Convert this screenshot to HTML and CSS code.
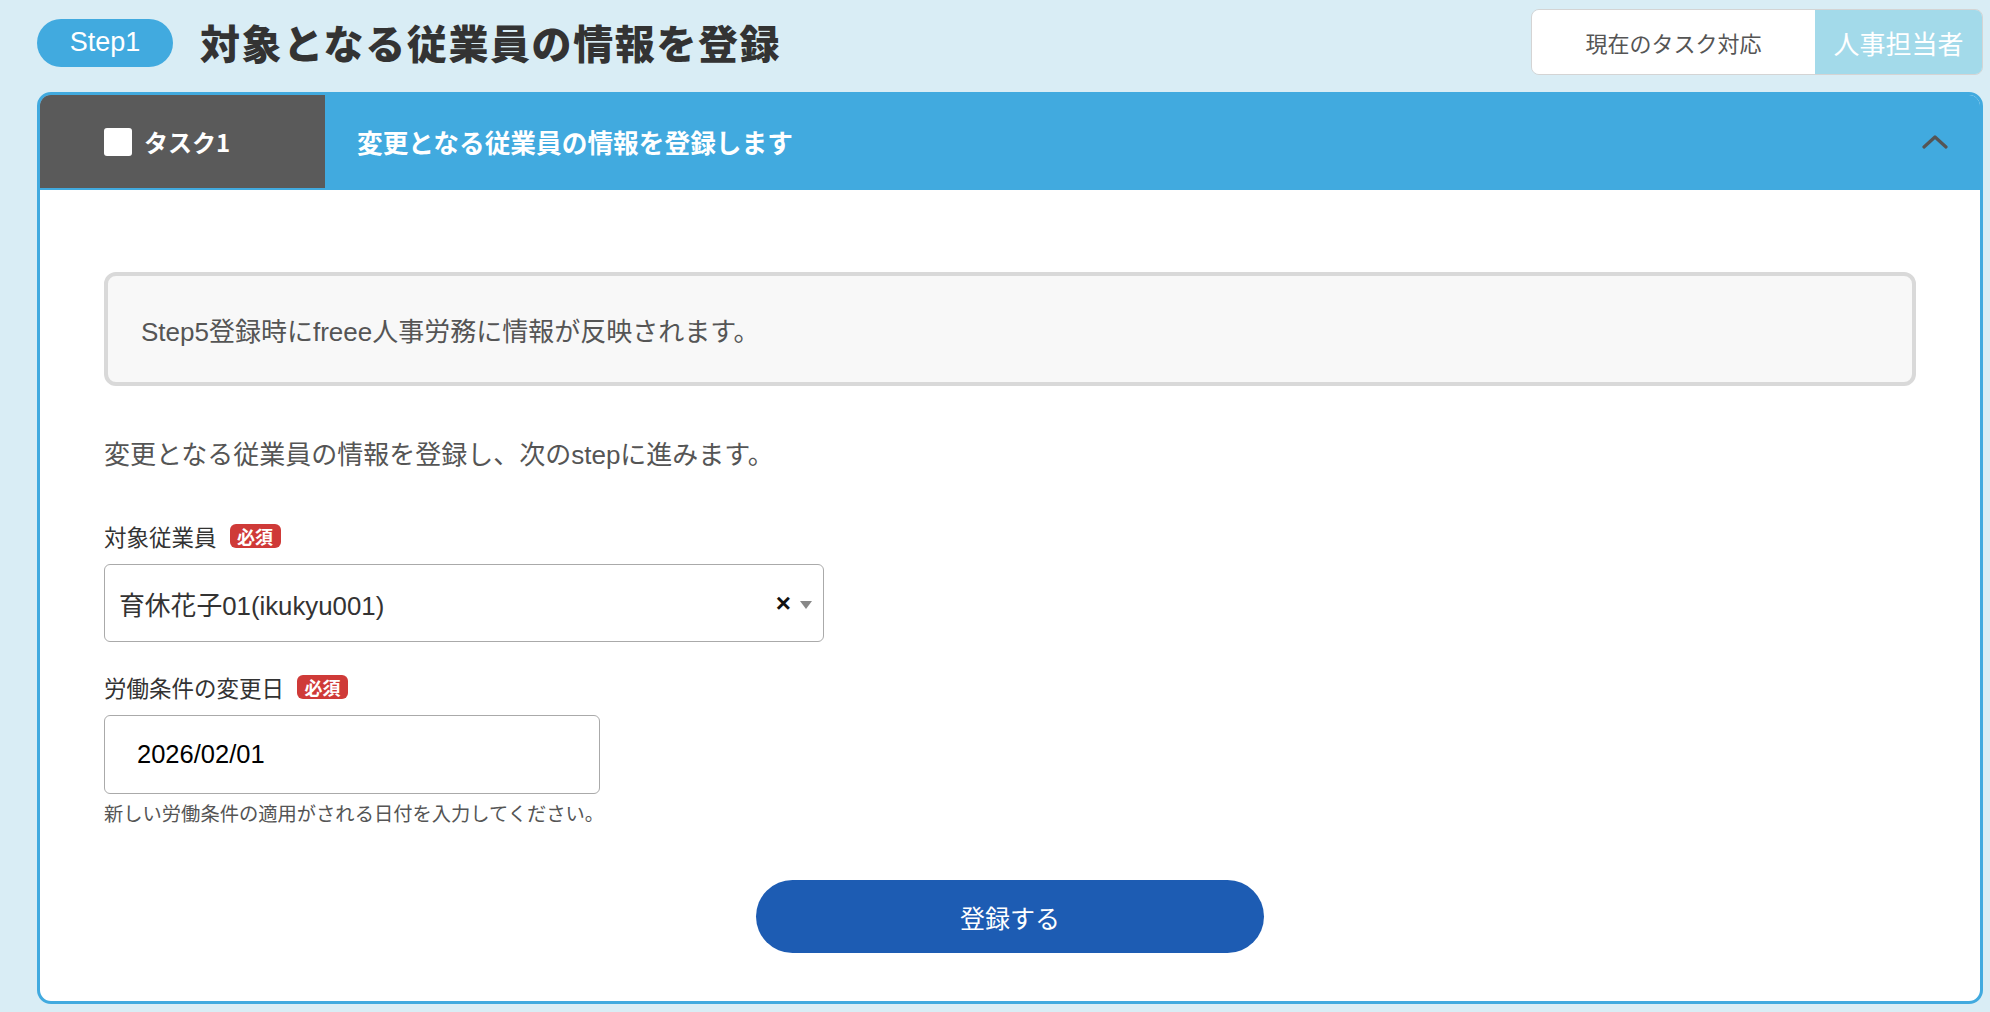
FILE: index.html
```html
<!DOCTYPE html>
<html lang="ja">
<head>
<meta charset="utf-8">
<title>Step1</title>
<link rel="stylesheet" href="styles.css">
</head>
<body>
<div class="page">
  <div class="topbar">
    <div class="title-group">
      <span class="step-pill">Step1</span>
      <h1 class="page-title">対象となる従業員の情報を登録</h1>
    </div>
    <div class="role-toggle">
      <span class="role-label">現在のタスク対応</span>
      <span class="role-value">人事担当者</span>
    </div>
  </div>

  <section class="card">
    <div class="card-header">
      <div class="task-tab">
        <span class="checkbox"></span>
        <span class="task-name">タスク1</span>
      </div>
      <div class="task-title">変更となる従業員の情報を登録します</div>
      <svg class="chevron" width="26" height="16" viewBox="0 0 26 16"><path d="M2 13 L13 3 L24 13" fill="none" stroke="#555" stroke-width="3.2" stroke-linecap="round" stroke-linejoin="round"/></svg>
    </div>

    <div class="card-body">
      <div class="notice">Step5登録時にfreee人事労務に情報が反映されます。</div>
      <p class="lead">変更となる従業員の情報を登録し、次のstepに進みます。</p>

      <div class="field">
        <div class="label">対象従業員<span class="badge">必須</span></div>
        <div class="select">
          <span class="select-value">育休花子01(ikukyu001)</span>
          <span class="select-icons"><span class="clear">×</span><span class="arrow"></span></span>
        </div>
      </div>

      <div class="field field-date">
        <div class="label">労働条件の変更日<span class="badge">必須</span></div>
        <div class="date-input">2026/02/01</div>
        <div class="help">新しい労働条件の適用がされる日付を入力してください。</div>
      </div>

      <div class="actions">
        <button class="submit">登録する</button>
      </div>
    </div>
  </section>
</div>
</body>
</html>
```

FILE: styles.css
```css
* { box-sizing: border-box; }
html, body {
  margin: 0;
  padding: 0;
  background: #d9edf5;
  font-family: "Liberation Sans", "Noto Sans CJK JP", sans-serif;
  color: #333;
}
.page {
  padding: 9px 7px 0 37px;
  width: 1990px;
  height: 1012px;
  overflow: hidden;
}
.topbar {
  display: flex;
  align-items: center;
  justify-content: space-between;
  height: 66px;
}
.title-group {
  display: flex;
  align-items: center;
}
.step-pill {
  display: flex;
  align-items: center;
  justify-content: center;
  width: 136px;
  height: 48px;
  border-radius: 24px;
  background: #41aadf;
  color: #fff;
  font-size: 27px;
  margin-top: 1px;
}
.page-title {
  margin: 0 0 0 27px;
  font-family: "Noto Sans CJK JP", sans-serif;
  font-size: 40px;
  font-weight: 900;
  color: #333;
  line-height: 1;
  letter-spacing: 1.6px;
}
.role-toggle {
  display: flex;
  height: 66px;
  border: 1px solid #d4d4d4;
  border-radius: 8px;
  overflow: hidden;
  width: 452px;
}
.role-label {
  width: 283px;
  background: #fff;
  display: flex;
  align-items: center;
  justify-content: center;
  font-family: "Noto Sans CJK JP", sans-serif;
  font-size: 22px;
  color: #555;
}
.role-value {
  flex: 1;
  background: #a3daea;
  display: flex;
  align-items: center;
  justify-content: center;
  font-family: "Noto Sans CJK JP", sans-serif;
  font-size: 26px;
  color: #fff;
}
.card {
  margin-top: 17px;
  border: 3px solid #41aadf;
  border-radius: 14px;
  overflow: hidden;
  background: #fff;
}
.card-header {
  display: flex;
  align-items: center;
  height: 95px;
  background: #41aadf;
  border-bottom: 2px solid #41aadf;
}
.task-tab {
  width: 285px;
  height: 93px;
  align-self: flex-start;
  background: #5a5a5a;
  display: flex;
  align-items: center;
  padding-left: 64px;
  gap: 12px;
}
.checkbox {
  width: 28px;
  height: 28px;
  background: #fff;
  border-radius: 3px;
}
.task-name {
  font-family: "Noto Sans CJK JP", sans-serif;
  font-weight: 700;
  font-size: 24px;
  color: #fff;
}
.task-title {
  flex: 1;
  margin-left: 32px;
  font-family: "Noto Sans CJK JP", sans-serif;
  font-weight: 700;
  font-size: 25.7px;
  color: #fff;
}
.chevron {
  margin-right: 32px;
}
.card-body {
  padding: 82px 64px 48px 64px;
}
.notice {
  height: 114px;
  border: 4px solid #d9d9d9;
  border-radius: 12px;
  background: #f8f8f8;
  display: flex;
  align-items: center;
  padding-left: 33px;
  font-size: 26px;
  color: #555;
}
.lead {
  margin: 51px 0 0 0;
  line-height: 36px;
  font-size: 26px;
  color: #555;
}
.field {
  margin-top: 48px;
}
.field-date {
  margin-top: 30px;
}
.label {
  display: flex;
  align-items: center;
  height: 30px;
  font-size: 22.5px;
  color: #333;
}
.badge {
  margin-left: 13px;
  width: 51px;
  height: 24px;
  border-radius: 6px;
  background: #cf3a38;
  color: #fff;
  font-size: 18px;
  font-weight: 700;
  display: flex;
  align-items: center;
  justify-content: center;
}
.select {
  margin-top: 13px;
  width: 720px;
  height: 78px;
  border: 1px solid #aaa;
  border-radius: 6px;
  display: flex;
  align-items: center;
  justify-content: space-between;
  padding: 0 11px 0 14px;
}
.select-value {
  font-size: 25.8px;
  color: #333;
}
.select-icons {
  display: flex;
  align-items: center;
  gap: 9px;
}
.clear {
  font-size: 26px;
  font-weight: 700;
  color: #111;
  line-height: 1;
}
.arrow {
  width: 0;
  height: 0;
  border-left: 6px solid transparent;
  border-right: 6px solid transparent;
  border-top: 8px solid #888;
  margin-top: 3px;
}
.date-input {
  margin-top: 13px;
  width: 496px;
  height: 79px;
  border: 1px solid #aaa;
  border-radius: 6px;
  display: flex;
  align-items: center;
  padding-left: 32px;
  font-size: 25.5px;
  color: #000;
}
.help {
  margin-top: 9px;
  line-height: 24px;
  font-size: 19.3px;
  color: #555;
}
.actions {
  margin-top: 53px;
  display: flex;
  justify-content: center;
}
.submit {
  width: 508px;
  height: 73px;
  border: none;
  border-radius: 37px;
  background: #1d5cb3;
  color: #fff;
  font-family: "Noto Sans CJK JP", sans-serif;
  font-size: 25px;
}
```
